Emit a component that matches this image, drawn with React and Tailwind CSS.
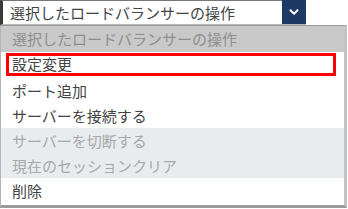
import { ChevronDown } from 'lucide-react';

const items = [
    { label: '設定変更', selected: true },
    { label: 'ポート追加' },
    { label: 'サーバーを接続する' },
    { label: 'サーバーを切断する', disabled: true },
    { label: '現在のセッションクリア', disabled: true },
    { label: '削除' },
];

export default function App() {
    return (
        <div className="w-[348px] h-[209px] bg-white overflow-hidden font-['Noto_Sans_CJK_JP',sans-serif] text-[15px]">
            {/* select box */}
            <div className="flex h-[25px]">
                <div className="w-[306px] h-[25px] flex border-l-[3px] border-t border-b border-l-[#3a3a3a] border-t-[#777] border-b-[#bbb] bg-white">
                    <div className="flex-1 pl-[7px] leading-[23px] text-[#444] whitespace-nowrap">
                        選択したロードバランサーの操作
                    </div>
                    <div className="w-[24px] h-[24px] -mt-px bg-[#1c3a63] flex items-center justify-center">
                        <ChevronDown size={14} strokeWidth={3.5} color="#ffffff" />
                    </div>
                </div>
            </div>

            {/* list */}
            <div className="w-[347px] h-[183px] border-t border-t-[#999] border-l border-l-[#b5b5b5] border-r-[3px] border-r-[#c4c4c4] border-b-[3px] border-b-[#9a9a9a]">
                <div className="h-[26px] bg-[#c9c9c9] pl-[11px] leading-[25px] text-[#8e8e8e] whitespace-nowrap">
                    選択したロードバランサーの操作
                </div>
                {items.map((item, i) => (
                    <div
                        key={i}
                        className={
                            'relative pl-[11px] whitespace-nowrap ' +
                            (i === 0 ? 'h-[26px] leading-[24px] ' : 'h-[25px] leading-[25px] ') +
                            (item.disabled ? 'bg-[#e9ecef] text-[#a8a8a8]' : 'bg-white text-[#444]')
                        }
                    >
                        {item.label}
                        {item.selected && (
                            <div className="absolute left-[5px] top-[1px] w-[330px] h-[23px] border-[3px] border-[#f00]" />
                        )}
                    </div>
                ))}
            </div>
        </div>
    );
}
